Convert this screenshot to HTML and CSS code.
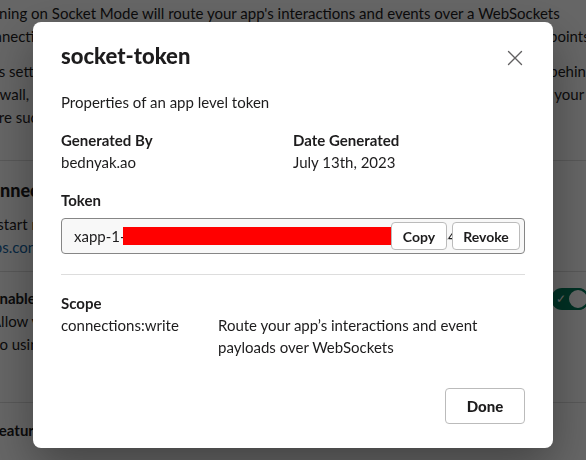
FILE: index.html
```html
<!DOCTYPE html>
<html lang="en">
<head>
<meta charset="utf-8">
<title>socket-token</title>
<link rel="stylesheet" href="styles.css">
</head>
<body>
<div class="page">
  <section class="section intro">
    <p class="para">Turning on Socket Mode will route your app's interactions and events over a WebSockets<br>connection instead of sending the payloads to Request URL which are public HTTP endpoints.</p>
    <p class="para">This setting is useful for apps that cannot be exposed to public traffic, such as the apps behind a<br>firewall, or for the developers who want to build, and test locally, without ever exposing your app to the internet.<br>more such uses are listed in our documentation.</p>
  </section>
  <section class="section connect">
    <h2 class="heading">Connect using Socket Mode</h2>
    <p class="para">To start receiving events, open a connection with<br><span class="link">apps.connections.open</span></p>
  </section>
  <section class="section enable">
    <div class="enable-row">
      <div>
        <h3 class="subheading">Enable Socket Mode</h3>
        <p class="para">Allow your app to receive events over WebSockets<br>do using a connection token.</p>
      </div>
      <span class="toggle"><span class="toggle-check">&#10003;</span><span class="toggle-knob"></span></span>
    </div>
  </section>
  <section class="section features">
    <h3 class="subheading">Features affected</h3>
  </section>
</div>

<div class="overlay">
  <div class="modal" role="dialog" aria-labelledby="modal-title">
    <header class="modal-header">
      <h1 class="modal-title" id="modal-title">socket-token</h1>
      <button class="close-btn" aria-label="Close">
        <svg width="16" height="16" viewBox="0 0 16 16"><path d="M1.5 1.5 L14.5 14.5 M14.5 1.5 L1.5 14.5" stroke="#616061" stroke-width="1.4" fill="none" stroke-linecap="round"/></svg>
      </button>
    </header>
    <p class="modal-desc">Properties of an app level token</p>
    <div class="meta">
      <div>
        <div class="label">Generated By</div>
        <div class="value">bednyak.ao</div>
      </div>
      <div>
        <div class="label">Date Generated</div>
        <div class="value">July 13th, 2023</div>
      </div>
    </div>
    <div class="label token-label">Token</div>
    <div class="token-field">
      <span class="token-text">xapp-1-<span class="redact"></span>2b1f0e84</span>
      <div class="token-actions">
        <button class="small-btn copy-btn">Copy</button>
        <button class="small-btn revoke-btn">Revoke</button>
      </div>
    </div>
    <hr class="divider">
    <div class="label">Scope</div>
    <div class="scope-row">
      <div class="scope-name">connections:write</div>
      <div class="scope-desc">Route your app’s interactions and event payloads over WebSockets</div>
    </div>
    <footer class="modal-footer">
      <button class="done-btn">Done</button>
    </footer>
  </div>
</div>
</body>
</html>
```

FILE: styles.css
```css
* { box-sizing: border-box; }

html, body {
  margin: 0;
  padding: 0;
  background: #ffffff;
  font-family: Lato, "Noto Sans", sans-serif;
  color: #1d1c1d;
  overflow: hidden;
  height: 460px;
}

.page {
  margin-left: -22px;
  width: 640px;
  font-size: 15px;
  line-height: 23px;
}

.section {
  border-bottom: 1px solid #dddddd;
}

.para {
  margin: 0;
  white-space: nowrap;
}

.intro {
  padding: 2px 0 31px;
}

.intro .para + .para {
  margin-top: 12px;
}

.connect {
  padding: 16px 0 12px;
}

.heading {
  margin: 0 0 10px;
  font-size: 18px;
  line-height: 26px;
  font-weight: 900;
}

.link {
  color: #1264a3;
}

.enable {
  padding: 15px 0 46px 13px;
}

.enable-row {
  display: flex;
  justify-content: space-between;
  align-items: flex-start;
}

.subheading {
  margin: 0;
  font-size: 15px;
  line-height: 23px;
  font-weight: 700;
}

.toggle {
  display: inline-flex;
  align-items: center;
  justify-content: space-between;
  margin-top: 1px;
  margin-right: 29px;
  width: 38px;
  height: 22px;
  background: #007a5a;
  border-radius: 11px;
  padding: 0 0 0 5px;
}

.toggle-check {
  color: #ffffff;
  font-size: 12px;
  line-height: 1;
}

.toggle-knob {
  width: 22px;
  height: 22px;
  border-radius: 50%;
  background: #ffffff;
  border: 2px solid #007a5a;
}

.features {
  border-bottom: 0;
  padding: 16px 0 17px 13px;
}

/* overlay + modal */
.overlay {
  position: fixed;
  inset: 0;
  background: rgba(0, 0, 0, 0.6);
  display: flex;
  justify-content: center;
  align-items: flex-start;
  padding-top: 22px;
}

.modal {
  width: 520px;
  height: 426px;
  background: #ffffff;
  border-radius: 8px;
  padding: 20px 28px 24px;
  box-shadow: 0 18px 48px rgba(0, 0, 0, 0.35);
  display: flex;
  flex-direction: column;
  font-size: 15px;
  line-height: 22px;
  color: #1d1c1d;
}

.modal-header {
  display: flex;
  justify-content: space-between;
  align-items: center;
  height: 28px;
}

.modal-title {
  margin: 0;
  font-size: 22px;
  line-height: 28px;
  font-weight: 900;
}

.close-btn {
  width: 36px;
  height: 36px;
  margin-right: -8px;
  margin-top: 4px;
  border: 0;
  background: transparent;
  padding: 0;
  display: flex;
  align-items: center;
  justify-content: center;
}

.modal-desc {
  margin: 21px 0 0;
}

.meta {
  margin-top: 16px;
  display: grid;
  grid-template-columns: 1fr 1fr;
}

.label {
  font-weight: 700;
}

.token-label {
  margin-top: 16px;
}

.token-field {
  position: relative;
  margin-top: 7px;
  height: 36px;
  border: 1px solid #868686;
  border-radius: 4px;
  background: #f8f8f8;
  padding: 0 12px;
  display: flex;
  align-items: center;
  overflow: hidden;
}

.token-text {
  white-space: nowrap;
  display: flex;
  align-items: center;
}

.redact {
  display: inline-block;
  width: 269px;
  height: 18px;
  margin-left: -3px;
  background: #ff0000;
}

.token-actions {
  position: absolute;
  right: 4px;
  top: 3px;
  display: flex;
  gap: 5px;
}

.small-btn {
  height: 28px;
  padding: 0 6px;
  border: 1px solid #bbbbbb;
  border-radius: 4px;
  background: #ffffff;
  font-family: Lato, "Noto Sans", sans-serif;
  font-size: 14px;
  font-weight: 700;
  color: #1d1c1d;
}

.copy-btn { width: 56px; }
.revoke-btn { width: 68px; }

.divider {
  margin: 20px 0 0;
  border: 0;
  border-top: 1px solid #dddddd;
}

.divider + .label {
  margin-top: 17px;
}

.scope-row {
  display: grid;
  grid-template-columns: 157px 1fr;
}

.scope-desc {
  padding-right: 40px;
}

.modal-footer {
  margin-top: auto;
  display: flex;
  justify-content: flex-end;
}

.done-btn {
  width: 80px;
  height: 36px;
  border: 1px solid #bbbbbb;
  border-radius: 4px;
  background: #ffffff;
  font-family: Lato, "Noto Sans", sans-serif;
  font-size: 15px;
  font-weight: 900;
  color: #1d1c1d;
}
```
